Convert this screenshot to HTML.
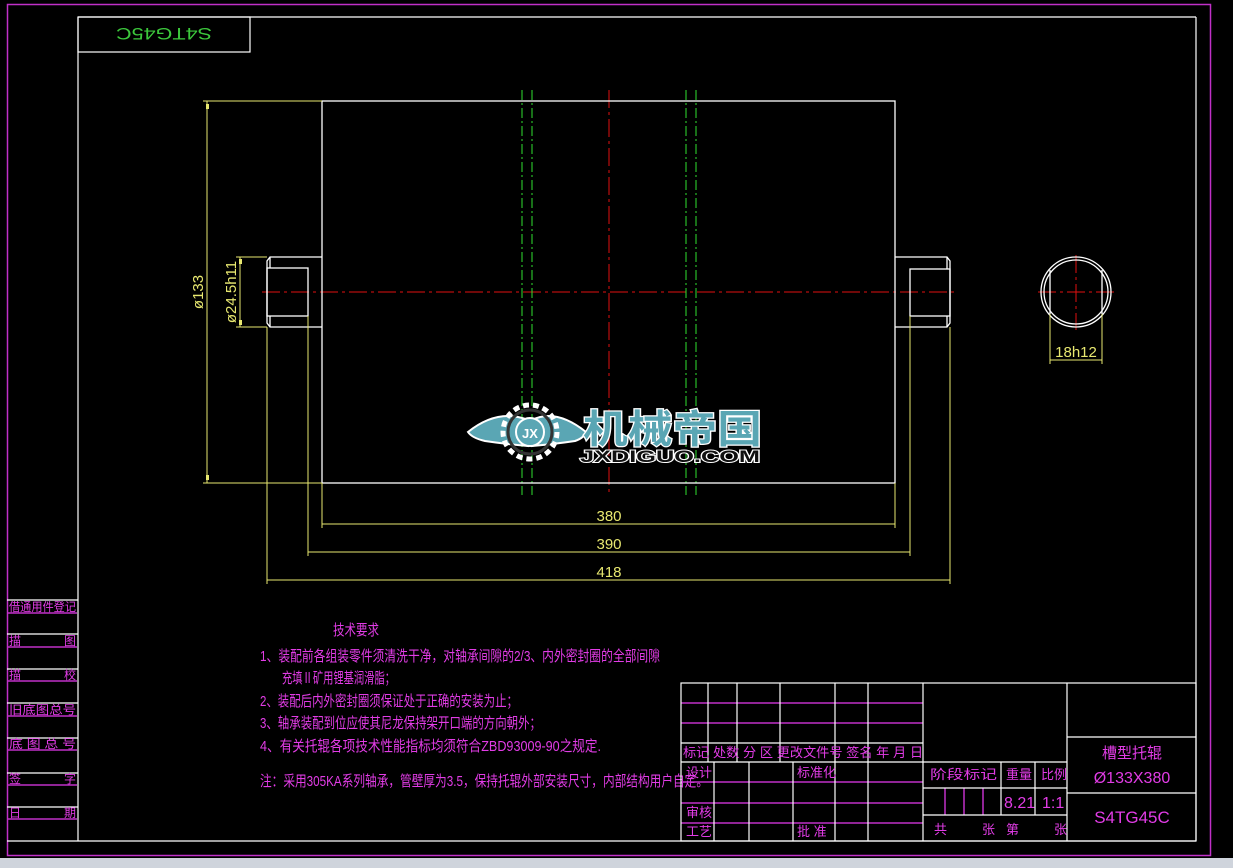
<!DOCTYPE html>
<html><head><meta charset="utf-8"><style>
html,body{margin:0;padding:0;background:#000;width:1233px;height:868px;overflow:hidden}
svg{display:block}
text{font-family:"Liberation Sans","Noto Sans CJK SC","WenQuanYi Zen Hei",sans-serif}
.m{fill:#e23ce6;font-size:14px}
.y{fill:#e8e870;font-size:15px}
</style></head><body>
<svg width="1233" height="868" viewBox="0 0 1233 868" xmlns="http://www.w3.org/2000/svg">
<rect width="1233" height="868" fill="#000"/>
<rect x="0" y="858" width="1233" height="10" fill="#cfd4dc"/>
<rect x="7.5" y="4.5" width="1203" height="851" fill="none" stroke="#c030c8" stroke-width="1.5"/>
<g stroke="#fff" stroke-width="1.2" fill="none">
<line x1="78" y1="17" x2="1196" y2="17"/>
<line x1="1196" y1="17" x2="1196" y2="841"/>
<line x1="7" y1="841" x2="1196" y2="841"/>
<line x1="78" y1="17" x2="78" y2="841"/>
<rect x="78" y="17" width="172" height="35"/>
<line x1="7" y1="600" x2="78" y2="600"/><line x1="7" y1="634" x2="78" y2="634"/>
<line x1="7" y1="669" x2="78" y2="669"/><line x1="7" y1="703" x2="78" y2="703"/>
<line x1="7" y1="738" x2="78" y2="738"/><line x1="7" y1="773" x2="78" y2="773"/>
<line x1="7" y1="807" x2="78" y2="807"/>
</g>
<g stroke="#c030c8" stroke-width="1.5">
<line x1="7" y1="613" x2="77" y2="613"/><line x1="7" y1="647" x2="77" y2="647"/>
<line x1="7" y1="681" x2="77" y2="681"/><line x1="7" y1="716" x2="77" y2="716"/>
<line x1="7" y1="750" x2="77" y2="750"/><line x1="7" y1="785" x2="77" y2="785"/>
<line x1="7" y1="819" x2="77" y2="819"/>
</g>
<g class="m" style="font-size:12px">
<text x="9" y="611" textLength="67" lengthAdjust="spacingAndGlyphs">借通用件登记</text>
<text x="9" y="645">描</text><text x="64" y="645">图</text>
<text x="9" y="679">描</text><text x="64" y="679">校</text>
<text x="9" y="714" textLength="67" lengthAdjust="spacingAndGlyphs">旧底图总号</text>
<text x="9" y="748" textLength="67" lengthAdjust="spacingAndGlyphs">底 图 总 号</text>
<text x="9" y="783">签</text><text x="64" y="783">字</text>
<text x="9" y="817">日</text><text x="64" y="817">期</text>
</g>
<text x="164" y="34" fill="#3cc83c" font-size="17" text-anchor="middle" transform="rotate(180 164 34) translate(0 6)" font-family="Liberation Mono, monospace" textLength="96" lengthAdjust="spacingAndGlyphs">S4TG45C</text>

<g stroke="#e01010" stroke-width="1" stroke-dasharray="18,4,3,4">
<line x1="262" y1="292" x2="958" y2="292"/>
<line x1="609" y1="90" x2="609" y2="495"/>
<line x1="1038" y1="292" x2="1114" y2="292"/>
<line x1="1076" y1="255" x2="1076" y2="330"/>
</g>
<g stroke="#30e030" stroke-width="1" stroke-dasharray="10,3,2,3">
<line x1="522" y1="90" x2="522" y2="495"/><line x1="532" y1="90" x2="532" y2="495"/>
<line x1="686" y1="90" x2="686" y2="495"/><line x1="696" y1="90" x2="696" y2="495"/>
</g>

<g stroke="#fff" stroke-width="1.3" fill="none">
<rect x="322" y="101" width="573" height="382"/>
<polyline points="322,257 270,257 267,261 267,323 270,327 322,327"/>
<rect x="267" y="268" width="41" height="48"/>
<line x1="270" y1="257" x2="270" y2="268"/><line x1="270" y1="316" x2="270" y2="327"/>
<polyline points="895,257 947,257 950,261 950,323 947,327 895,327"/>
<rect x="910" y="269" width="40" height="47"/>
<line x1="947" y1="257" x2="947" y2="269"/><line x1="947" y1="316" x2="947" y2="327"/>
<circle cx="1076" cy="292" r="35"/>
<circle cx="1076" cy="292" r="32"/>
<line x1="1050" y1="270" x2="1050" y2="314"/><line x1="1102" y1="270" x2="1102" y2="314"/>
</g>

<g stroke="#e8e870" stroke-width="1" fill="none">
<line x1="203" y1="101" x2="322" y2="101"/><line x1="203" y1="483" x2="322" y2="483"/>
<line x1="207" y1="101" x2="207" y2="483"/>
<line x1="236" y1="257" x2="267" y2="257"/><line x1="236" y1="327" x2="267" y2="327"/>
<line x1="240" y1="257" x2="240" y2="327"/>
<line x1="322" y1="483" x2="322" y2="528"/><line x1="895" y1="483" x2="895" y2="528"/>
<line x1="308" y1="316" x2="308" y2="556"/><line x1="910" y1="316" x2="910" y2="556"/>
<line x1="267" y1="327" x2="267" y2="584"/><line x1="950" y1="327" x2="950" y2="584"/>
<line x1="322" y1="524" x2="895" y2="524"/>
<line x1="308" y1="552" x2="910" y2="552"/>
<line x1="267" y1="580" x2="950" y2="580"/>
<line x1="1050" y1="314" x2="1050" y2="364"/><line x1="1102" y1="314" x2="1102" y2="364"/>
<line x1="1050" y1="360" x2="1102" y2="360"/>
</g>
<g fill="#e8e870">
<rect x="206" y="104" width="3" height="5"/><rect x="206" y="475" width="3" height="5"/>
<rect x="239" y="259" width="3" height="5"/><rect x="239" y="320" width="3" height="5"/>
</g>
<g class="y">
<text x="609" y="521" text-anchor="middle">380</text>
<text x="609" y="549" text-anchor="middle">390</text>
<text x="609" y="577" text-anchor="middle">418</text>
<text x="1076" y="357" text-anchor="middle">18h12</text>
<text transform="translate(203 292) rotate(-90)" text-anchor="middle">ø133</text>
<text transform="translate(236 292) rotate(-90)" text-anchor="middle">ø24.5h11</text>
</g>

<g>
<path d="M468 432 Q498 408 528 420 L528 446 Q505 444 485 441 Q472 438 468 432Z" fill="#5aa6b4" stroke="#fff" stroke-width="2"/>
<path d="M586 432 Q556 408 532 420 L532 446 Q555 444 575 441 Q584 438 586 432Z" fill="#5aa6b4" stroke="#fff" stroke-width="2"/>
<circle cx="530" cy="432" r="27" fill="none" stroke="#fff" stroke-width="5" stroke-dasharray="6,4"/>
<circle cx="530" cy="432" r="22" fill="none" stroke="#333" stroke-width="3"/>
<circle cx="530" cy="432" r="14" fill="#5aa6b4" stroke="#fff" stroke-width="2"/>
<text x="530" y="438" fill="#fff" font-size="13" text-anchor="middle" font-weight="bold" font-family="Liberation Serif,serif">JX</text>
<text x="583" y="443" font-size="39" font-weight="bold" fill="#5aa6b4" stroke="#fff" stroke-width="2.5" paint-order="stroke" textLength="179" lengthAdjust="spacingAndGlyphs" style="font-family:'Noto Sans CJK SC','WenQuanYi Zen Hei',sans-serif">机械帝国</text>
<text x="580" y="462" font-size="17" font-weight="bold" fill="#111" stroke="#fff" stroke-width="2" paint-order="stroke" textLength="180" lengthAdjust="spacingAndGlyphs">JXDIGUO.COM</text>
</g>

<g class="m" style="font-size:15px">
<text x="333" y="635" textLength="46" lengthAdjust="spacingAndGlyphs">技术要求</text>
<text x="260" y="661" textLength="400" lengthAdjust="spacingAndGlyphs">1、装配前各组装零件须清洗干净，对轴承间隙的2/3、内外密封圈的全部间隙</text>
<text x="282" y="683" textLength="113" lengthAdjust="spacingAndGlyphs">充填Ⅱ矿用锂基润滑脂；</text>
<text x="260" y="706" textLength="258" lengthAdjust="spacingAndGlyphs">2、装配后内外密封圈须保证处于正确的安装为止；</text>
<text x="260" y="728" textLength="281" lengthAdjust="spacingAndGlyphs">3、轴承装配到位应使其尼龙保持架开口端的方向朝外；</text>
<text x="260" y="751" textLength="341" lengthAdjust="spacingAndGlyphs">4、有关托辊各项技术性能指标均须符合ZBD93009-90之规定.</text>
<text x="260" y="786" textLength="448" lengthAdjust="spacingAndGlyphs">注：采用305KA系列轴承，管壁厚为3.5，保持托辊外部安装尺寸，内部结构用户自定。</text>
</g>

<g stroke="#c030c8" stroke-width="1.5">
<line x1="681" y1="703" x2="923" y2="703"/><line x1="681" y1="723" x2="923" y2="723"/>
<line x1="681" y1="782" x2="923" y2="782"/><line x1="681" y1="803" x2="923" y2="803"/>
<line x1="681" y1="823" x2="923" y2="823"/>
<line x1="945" y1="788" x2="945" y2="815"/><line x1="964" y1="788" x2="964" y2="815"/><line x1="983" y1="788" x2="983" y2="815"/>
</g>
<g stroke="#fff" stroke-width="1.2" fill="none">
<rect x="681" y="683" width="515" height="158"/>
<line x1="681" y1="743" x2="923" y2="743"/>
<line x1="681" y1="762" x2="923" y2="762"/>
<line x1="708" y1="683" x2="708" y2="762"/><line x1="737" y1="683" x2="737" y2="762"/>
<line x1="780" y1="683" x2="780" y2="762"/><line x1="835" y1="683" x2="835" y2="841"/>
<line x1="868" y1="683" x2="868" y2="841"/><line x1="923" y1="683" x2="923" y2="841"/>
<line x1="714" y1="762" x2="714" y2="841"/><line x1="749" y1="762" x2="749" y2="841"/>
<line x1="793" y1="762" x2="793" y2="841"/>
<line x1="1067" y1="683" x2="1067" y2="841"/>
<line x1="923" y1="762" x2="1067" y2="762"/>
<line x1="923" y1="788" x2="1067" y2="788"/>
<line x1="923" y1="815" x2="1067" y2="815"/>
<line x1="1001" y1="762" x2="1001" y2="815"/><line x1="1035" y1="762" x2="1035" y2="815"/>
<line x1="1067" y1="737" x2="1196" y2="737"/><line x1="1067" y1="793" x2="1196" y2="793"/>
</g>
<g class="m" style="font-size:13px">
<text x="683" y="757" textLength="240" lengthAdjust="spacingAndGlyphs">标记 处数 分  区 更改文件号 签名  年  月  日</text>
<text x="686" y="777">设计</text>
<text x="686" y="817">审核</text>
<text x="686" y="836">工艺</text>
<text x="797" y="777">标准化</text>
<text x="797" y="836">批  准</text>
<text x="930" y="779" textLength="67" lengthAdjust="spacingAndGlyphs">阶段标记</text>
<text x="1006" y="779">重量</text>
<text x="1041" y="779">比例</text>
<text x="1004" y="808" style="font-size:16px">8.21</text>
<text x="1042" y="808" style="font-size:16px">1:1</text>
<text x="934" y="834">共</text>
<text x="982" y="834">张</text>
<text x="1006" y="834">第</text>
<text x="1054" y="834">张</text>
<text x="1132" y="758" text-anchor="middle" style="font-size:15px">槽型托辊</text>
<text x="1132" y="783" text-anchor="middle" style="font-size:16px">Ø133X380</text>
<text x="1132" y="823" text-anchor="middle" style="font-size:17px">S4TG45C</text>
</g>
</svg>
</body></html>
